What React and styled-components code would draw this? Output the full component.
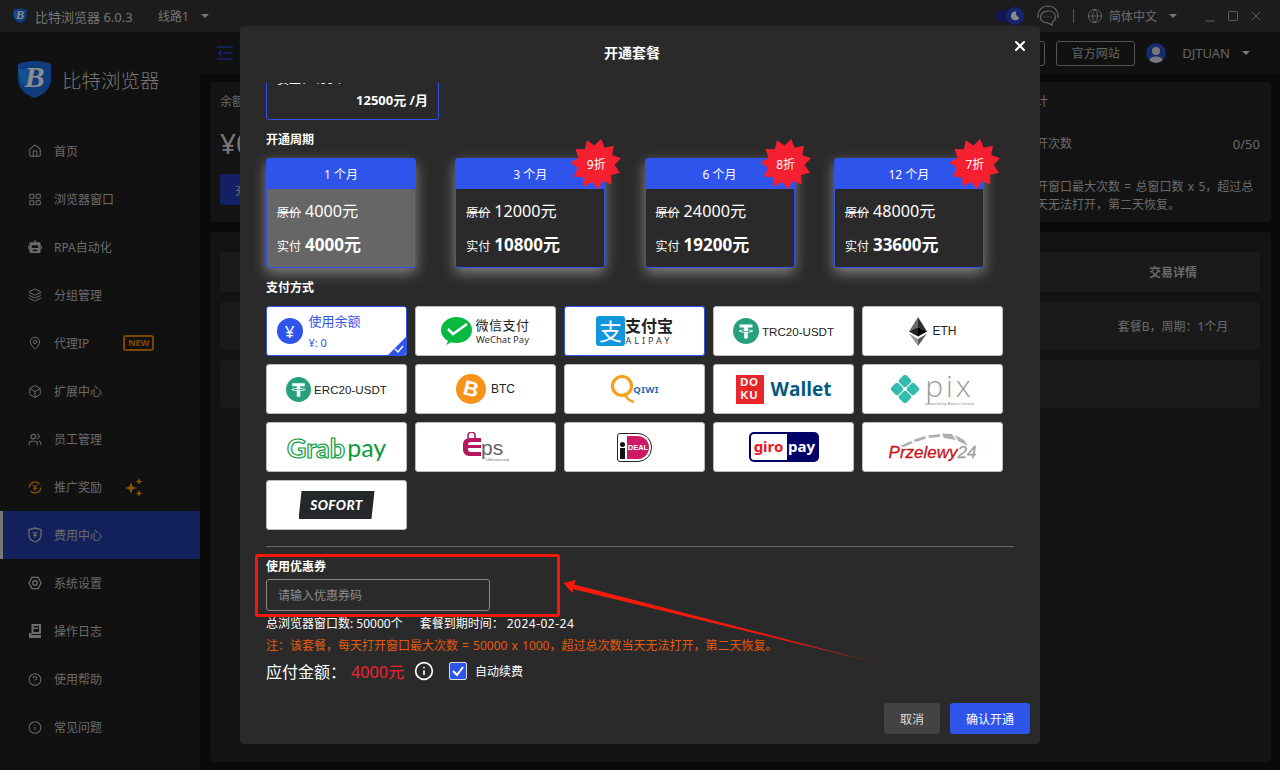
import React from 'react';
import styled, { createGlobalStyle } from 'styled-components';
import {
  House, LayoutGrid, Layers, MapPin, Box, Users, CircleHelp, Info, Globe, Minus, Square, X,
} from 'lucide-react';

const GlobalStyle = createGlobalStyle`
  html, body { margin: 0; padding: 0; background: #0a0a0a; }
  * { box-sizing: border-box; }
  body { font-family: "Noto Sans", "Noto Sans CJK SC", sans-serif; }
`;

const Page = styled.div`
  position: relative;
  width: 1280px;
  height: 770px;
  overflow: hidden;
  display: flex;
  flex-direction: column;
  font-size: 12px;
  color: #6b6b6b;
`;

const TitleBar = styled.div`
  height: 32px;
  flex: none;
  background: #1c1c1c;
  display: flex;
  align-items: center;
  padding-left: 13px;
  color: #757575;
`;

const TitleName = styled.span`
  margin-left: 8px;
  width: 123px;
  font-size: 13px;
`;

const Caret = styled.span`
  width: 0;
  height: 0;
  border-left: 4px solid transparent;
  border-right: 4px solid transparent;
  border-top: 4px solid ${props => props.$color || '#777'};
  margin-left: ${props => props.$left || 12}px;
`;

const TitleRight = styled.div`
  margin-left: auto;
  display: flex;
  align-items: center;
  padding-right: 17px;
  color: #6e6e6e;
`;

const Toggle = styled.div`
  position: relative;
  width: 28px;
  height: 12px;
  border-radius: 6px;
  background: #12194a;
`;

const ToggleKnob = styled.div`
  position: absolute;
  right: -1px;
  top: -3px;
  width: 18px;
  height: 18px;
  border-radius: 50%;
  background: #16246c;
  display: flex;
  align-items: center;
  justify-content: center;
`;

const SupportIcon = styled.svg`
  margin-left: 13px;
`;

const BarSep = styled.div`
  width: 1px;
  height: 14px;
  background: #555;
  margin: 0 13px;
`;

const LangName = styled.span`
  margin-left: 6px;
`;

const WindowButtons = styled.div`
  display: flex;
  align-items: center;
  gap: 10px;
  margin-left: 26px;
  color: #6e6e6e;
`;

const MinimizeIcon = styled(Minus)`
  margin-top: 10px;
`;

const Layout = styled.div`
  flex: 1;
  display: flex;
  min-height: 0;
`;

const Sidebar = styled.div`
  width: 200px;
  flex: none;
  background: #111;
  display: flex;
  flex-direction: column;
`;

const Brand = styled.div`
  height: 95px;
  display: flex;
  align-items: center;
  padding: 0 0 0 17px;
  gap: 10px;
  font-size: 19.5px;
  font-weight: 300;
  color: #757575;
`;

const MenuList = styled.div`
  display: flex;
  flex-direction: column;
`;

const MenuItem = styled.div`
  height: 48px;
  display: flex;
  align-items: center;
  padding-left: ${props => props.$active ? 25 : 28}px;
  gap: 12px;
  background: ${props => props.$active ? '#12205c' : 'transparent'};
  border-left: ${props => props.$active ? '3px solid #777' : 'none'};
  color: #6b6b6b;
`;

const MenuIcon = styled.span`
  width: 14px;
  height: 16px;
  display: flex;
  align-items: center;
  justify-content: center;
  flex: none;
`;

const NewBadge = styled.span`
  margin-left: 22px;
  width: 31px;
  height: 16px;
  border: 2px solid #7a4700;
  border-radius: 3px;
  color: #7a4700;
  font-size: 9px;
  font-weight: 800;
  line-height: 12px;
  text-align: center;
`;

const Spark = styled.span`
  margin-left: 10px;
  display: flex;
`;

const Main = styled.div`
  flex: 1;
  display: flex;
  flex-direction: column;
  min-width: 0;
`;

const Header = styled.div`
  height: 42px;
  flex: none;
  background: #111;
  display: flex;
  align-items: center;
  padding: 0 30px 0 17px;
`;

const HeaderRight = styled.div`
  margin-left: auto;
  display: flex;
  align-items: center;
  color: #666;
`;

const OutlineButton = styled.div`
  width: ${props => props.$width}px;
  height: 25px;
  margin-right: 11px;
  border: 1px solid #555;
  border-radius: 3px;
  display: flex;
  align-items: center;
  justify-content: center;
`;

const Avatar = styled.div`
  width: 20px;
  height: 20px;
  border-radius: 50%;
  background: #1a2a70;
  overflow: hidden;
  display: flex;
  justify-content: center;
`;

const UserName = styled.span`
  margin-left: 16px;
  font-size: 13px;
`;

const Content = styled.div`
  flex: 1;
  background: #0a0a0a;
  padding: 8px 9px 8px 10px;
  display: flex;
  flex-direction: column;
  gap: 10px;
`;

const TopCards = styled.div`
  height: 140px;
  display: flex;
  gap: 10px;
`;

const Card = styled.div`
  background: #131313;
  border-radius: 4px;
  padding: 12px 10px;
  flex: ${props => props.$grow ? 1 : 'none'};
  width: ${props => props.$grow ? 'auto' : '281px'};
  padding-right: ${props => props.$grow ? 10 : 11}px;
`;

const Muted = styled.div`
  line-height: 16px;
`;

const Balance = styled.div`
  font-size: 28px;
  line-height: 40px;
  margin-top: 13px;
  color: #777;
`;

const RechargeButton = styled.div`
  width: 80px;
  height: 31px;
  margin-top: 11px;
  padding-left: 15px;
  background: #142066;
  border-radius: 3px;
  display: flex;
  align-items: center;
`;

const StatRow = styled.div`
  display: flex;
  justify-content: space-between;
  margin-top: 26px;
  line-height: 16px;
`;

const StatValue = styled.span`
  font-size: 13px;
`;

const StatNote = styled.div`
  margin-top: 26px;
  line-height: 18px;
  word-spacing: 1.2px;
`;

const TableCard = styled.div`
  flex: 1;
  background: #131313;
  border-radius: 4px;
  padding: 20px 11px 0 10px;
  display: flex;
  flex-direction: column;
  gap: 10px;
`;

const TableRow = styled.div`
  height: ${props => props.$head ? 40 : 48}px;
  background: #1a1a1a;
  border-radius: 4px;
  display: flex;
  justify-content: flex-end;
  align-items: center;
  font-weight: ${props => props.$head ? 700 : 400};
`;

const TableCell = styled.div`
  width: 174px;
  text-align: center;
`;

const Modal = styled.div`
  position: absolute;
  left: 240px;
  top: 26px;
  width: 800px;
  height: 718px;
  background: #2a2a2a;
  border-radius: 4px;
  display: flex;
  flex-direction: column;
  color: #fff;
`;

const ModalHead = styled.div`
  height: 57px;
  flex: none;
  display: flex;
  align-items: center;
  justify-content: center;
  font-size: 14px;
  font-weight: 700;
  padding: 0 16px 5px 0;
`;

const CloseBtn = styled.span`
  position: absolute;
  right: 12px;
  top: 12px;
  display: flex;
  color: #fff;
`;

const ModalBody = styled.div`
  flex: 1;
  min-height: 0;
  overflow: hidden;
  padding: 0 26px;
`;

const PlanCard = styled.div`
  width: 173px;
  height: 100px;
  margin-top: -63px;
  border: 1px solid #2f54eb;
  border-radius: 3px;
  display: flex;
  flex-direction: column;
  justify-content: flex-end;
  padding: 0 10px 10px;
`;

const PlanLine = styled.div`
  line-height: 16px;
  margin-bottom: 3px;
`;

const PlanPrice = styled.div`
  text-align: right;
  font-weight: 700;
  font-size: 13px;
  line-height: 18px;
`;

const SectionLabel = styled.div`
  font-size: 12px;
  font-weight: 700;
  line-height: 18px;
  margin-top: ${props => props.$top}px;
`;

const PeriodRow = styled.div`
  display: flex;
  gap: 39.3px;
  margin-top: 9px;
`;

const PeriodCard = styled.div`
  position: relative;
  width: 150px;
  height: 110px;
  border: 1px solid #2f54eb;
  border-radius: 3px;
  background: ${props => props.$active ? '#666' : '#2a2a2a'};
  box-shadow: 0 5px 14px rgba(255, 255, 255, 0.42);
`;

const PeriodHead = styled.div`
  height: 30px;
  background: #2f54eb;
  display: flex;
  align-items: center;
  justify-content: center;
`;

const PriceLine = styled.div`
  display: flex;
  align-items: baseline;
  gap: 4px;
  padding-left: 10px;
  height: 34px;
  line-height: 34px;
  margin-top: ${props => props.$first ? 5 : 0}px;
`;

const PriceTag = styled.span`
  text-decoration: ${props => props.$struck ? 'line-through' : 'none'};
`;

const PriceValue = styled.span`
  font-size: ${props => props.$bold ? 17 : 16.2}px;
  font-weight: ${props => props.$bold ? 700 : 400};
`;

const Burst = styled.div`
  position: absolute;
  right: -18px;
  top: -20px;
  width: 52px;
  height: 50px;
  display: flex;
  align-items: center;
  justify-content: center;
`;

const BurstShape = styled.svg`
  position: absolute;
  inset: 0;
`;

const BurstText = styled.span`
  position: relative;
  color: #fff;
  font-size: 12px;
`;

const PayGrid = styled.div`
  display: grid;
  grid-template-columns: repeat(5, 141px);
  grid-auto-rows: 50px;
  gap: 8px;
  margin-top: 9px;
`;

const PayCard = styled.div`
  position: relative;
  overflow: hidden;
  background: #fff;
  border: 1px solid ${props => props.$selected ? '#2f54eb' : '#bbb'};
  border-radius: 3px;
  display: flex;
  align-items: center;
  justify-content: center;
  gap: ${props => props.$gap ?? 3}px;
  color: #222;
`;

const CornerCheck = styled.svg`
  position: absolute;
  right: 0;
  bottom: 0;
`;

const BalanceCoin = styled.span`
  width: 26px;
  height: 26px;
  border-radius: 50%;
  background: #2f54eb;
  color: #fff;
  font-size: 17px;
  display: flex;
  align-items: center;
  justify-content: center;
`;

const BalanceText = styled.div`
  color: #2f54eb;
  width: 88px;
  margin-left: 3px;
  margin-top: -1px;
`;

const BalanceTitle = styled.div`
  font-size: 13px;
  line-height: 20px;
`;

const BalanceAmount = styled.div`
  font-size: 11px;
  line-height: 14px;
  margin-top: 5px;
`;

const TwoLine = styled.div`
  display: flex;
  flex-direction: column;
  align-items: center;
`;

const WechatName = styled.span`
  font-size: 13px;
  line-height: 17px;
  letter-spacing: 0.5px;
`;

const WechatSub = styled.span`
  font-size: 9.5px;
  line-height: 11px;
  color: #333;
`;

const AliName = styled.span`
  font-size: 16px;
  font-weight: 700;
  line-height: 18px;
  color: #222;
`;

const AliSub = styled.span`
  font-size: 9px;
  line-height: 11px;
  letter-spacing: 3px;
  color: #333;
`;

const AliSquare = styled.span`
  width: 29px;
  height: 30px;
  border-radius: 3px;
  background: #1296db;
  color: #fff;
  font-size: 23px;
  line-height: 30px;
  text-align: center;
`;

const CoinLabel = styled.span`
  font-family: "Liberation Sans", Arial, sans-serif;
  font-size: ${props => props.$small ? 11.6 : 12}px;
  color: #222;
`;

const QiwiLabel = styled.span`
  font-size: 9.5px;
  font-weight: 700;
  color: #1f6bb5;
  letter-spacing: 0.3px;
  margin-left: -6px;
  margin-top: 1px;
`;

const DokuSquare = styled.span`
  width: 28px;
  height: 29px;
  background: #e8262a;
  color: #fff;
  font-family: "Liberation Sans", sans-serif;
  font-size: 11px;
  font-weight: 700;
  line-height: 13px;
  text-align: center;
  display: flex;
  flex-direction: column;
  justify-content: center;
  letter-spacing: 1px;
`;

const WalletLabel = styled.span`
  font-family: "Open Sans", sans-serif;
  font-size: 19px;
  font-weight: 700;
  color: #045a7d;
  margin-left: 4px;
`;

const PixName = styled.span`
  font-family: "Open Sans", sans-serif;
  font-weight: 300;
  font-size: 30px;
  line-height: 30px;
  color: #9a9a9a;
  letter-spacing: 3px;
`;

const PixSub = styled.span`
  font-size: 4px;
  line-height: 6px;
  color: #888;
`;

const GrabWord = styled.span`
  font-family: "Lato", sans-serif;
  font-size: 27px;
  font-weight: 700;
  color: #fff;
  -webkit-text-stroke: 1.2px #0a9b3c;
`;

const PayWord = styled.span`
  font-family: "Lato", sans-serif;
  font-size: 25px;
  color: #0a9b3c;
  margin-left: 2px;
`;

const IdealBox = styled.div`
  display: flex;
  align-items: stretch;
  width: 35px;
  height: 29px;
  border: 1px solid #222;
  border-radius: 3px 14px 14px 3px;
  padding: 2px;
  gap: 2px;
`;

const IdealI = styled.span`
  width: 5px;
  flex: none;
  display: flex;
  flex-direction: column;
  justify-content: flex-end;
  gap: 1px;
`;

const IdealDot = styled.span`
  width: 5px;
  height: 5px;
  border-radius: 50%;
  background: #111;
`;

const IdealBar = styled.span`
  width: 5px;
  height: 11px;
  background: #111;
`;

const IdealD = styled.span`
  flex: 1;
  background: #cc1a66;
  border-radius: 0 12px 12px 0;
  color: #fff;
  font-family: "Liberation Sans", sans-serif;
  font-size: 7.5px;
  font-weight: 700;
  line-height: 23px;
  text-align: center;
`;

const GiroBox = styled.div`
  width: 70px;
  height: 30px;
  background: #000268;
  border-radius: 5px;
  display: flex;
  padding: 2px;
  font-size: 15px;
  font-weight: 700;
`;

const GiroLeft = styled.span`
  width: 36px;
  background: #fff;
  color: #f0141e;
  border-radius: 3px 0 0 3px;
  text-align: center;
  line-height: 24px;
`;

const GiroRight = styled.span`
  flex: 1;
  color: #fff;
  text-align: center;
  line-height: 24px;
`;

const P24Wrap = styled.div`
  display: flex;
  flex-direction: column;
  align-items: center;
  width: 86px;
`;

const P24Name = styled.span`
  font-family: "Liberation Sans", sans-serif;
  font-style: italic;
  font-size: 17px;
  line-height: 18px;
  color: #c8141c;
  margin-top: -3px;
  -webkit-text-stroke: 0.3px currentColor;
`;

const P24Num = styled.span`
  color: #a0a0a0;
`;

const SofortBox = styled.div`
  width: 76px;
  height: 28px;
  background: #25282b;
  clip-path: polygon(4% 0, 100% 0, 96% 100%, 0 100%);
  color: #fff;
  font-family: "Lato", sans-serif;
  font-style: italic;
  font-weight: 900;
  font-size: 13.5px;
  line-height: 28px;
  text-align: center;
  letter-spacing: 0.4px;
`;

const Divider = styled.div`
  width: 748px;
  height: 1px;
  background: #666;
  margin-top: 16px;
`;

const CouponInput = styled.input`
  display: block;
  width: 224px;
  height: 32px;
  margin-top: 3px;
  padding: 0 11px;
  background: transparent;
  border: 1px solid #888;
  border-radius: 3px;
  color: #fff;
  font: inherit;
  font-size: 12px;
  outline: none;
  &::placeholder { color: #8c8c8c; }
`;

const InfoLine = styled.div`
  margin-top: 4px;
  line-height: 18px;
  display: flex;
`;

const InfoGap = styled.span`
  margin-left: 17px;
`;

const InfoDate = styled.span`
  margin-left: 3px;
  letter-spacing: 0.5px;
`;

const NoteLine = styled.div`
  margin-top: 4px;
  line-height: 18px;
  color: #e8590c;
  word-spacing: 1px;
`;

const PayRow = styled.div`
  margin-top: 4px;
  height: 24px;
  display: flex;
  align-items: center;
`;

const PayLabel = styled.span`
  font-size: 16px;
  width: 85px;
`;

const PayAmount = styled.span`
  font-size: 16.2px;
  color: #f5222d;
  width: 63px;
`;

const InfoCircle = styled.span`
  display: flex;
  width: 35px;
  color: #fff;
`;

const CheckBox = styled.span`
  width: 18px;
  height: 18px;
  border-radius: 2px;
  background: #2f54eb;
  border: 1px solid #ddd;
  display: flex;
  align-items: center;
  justify-content: center;
  margin-right: 8px;
`;

const ModalFoot = styled.div`
  flex: none;
  display: flex;
  justify-content: flex-end;
  gap: 10px;
  padding: 0 10px 10px 0;
`;

const FootButton = styled.div`
  width: ${props => props.$primary ? 80 : 56}px;
  height: 31px;
  border-radius: 3px;
  background: ${props => props.$primary ? '#2f54eb' : '#434343'};
  color: ${props => props.$primary ? '#fff' : '#ddd'};
  display: flex;
  align-items: center;
  justify-content: center;
`;

const RedBox = styled.div`
  position: absolute;
  left: 15px;
  top: 528px;
  width: 305px;
  height: 63px;
  border: 3px solid #f5170c;
  border-radius: 3px;
  pointer-events: none;
`;

const ArrowSvg = styled.svg`
  position: absolute;
  left: 320px;
  top: 550px;
`;

const burstPoints = (() => {
  const pts = [];
  const n = 11;
  for (let i = 0; i < n * 2; i++) {
    const r = i % 2 === 0 ? 25.5 : 18.5;
    const a = (Math.PI * i) / n - Math.PI / 2.3;
    pts.push(`${(26 + r * Math.cos(a)).toFixed(1)},${(25 + r * Math.sin(a)).toFixed(1)}`);
  }
  return pts.join(' ');
})();

const ShieldLogo = ({ size }) => (
  <svg width={size} height={size * 1.12} viewBox="0 0 36 40">
    <path d="M18 1 C24 1 30 2 35 4 L35 20 C35 29 27 36 18 39 C9 36 1 29 1 20 L1 4 C6 2 12 1 18 1Z" fill="#0f3c7e" />
    <path d="M1 9 L14 9 L10 27 L4 24 Z" fill="#12508f" />
    <text x="18" y="28" textAnchor="middle" fontFamily="Liberation Serif, serif" fontStyle="italic" fontWeight="700" fontSize="31" fill="#8d8d8d">B</text>
  </svg>
);

const CollapseIcon = () => (
  <svg width="16" height="14" viewBox="0 0 16 14" fill="none" stroke="#16246c" strokeWidth="1.5">
    <path d="M0 1 H16 M6 7 H16 M0 13 H16" />
    <path d="M4.5 3.5 L0.5 7 L4.5 10.5Z" fill="#16246c" stroke="none" />
  </svg>
);

const RobotIcon = () => (
  <svg width="15" height="14" viewBox="0 0 15 14" fill="#6b6b6b">
    <path d="M6.5 0 H8.5 V2 H6.5Z" />
    <path d="M3 2 H12 A1.5 1.5 0 0 1 13.5 3.5 V12 A1.5 1.5 0 0 1 12 13.5 H3 A1.5 1.5 0 0 1 1.5 12 V3.5 A1.5 1.5 0 0 1 3 2Z M4 5 V8 H11 V5Z M5 10 V11.5 H10 V10Z" fillRule="evenodd" />
    <path d="M0 5.5 H1 V9.5 H0Z M14 5.5 H15 V9.5 H14Z" />
  </svg>
);

const RewardIcon = () => (
  <svg width="15" height="15" viewBox="0 0 16 16" fill="none" stroke="#8a4f00" strokeWidth="1.5">
    <path d="M1.5 8a6.5 6.5 0 0 1 11.5-4" />
    <path d="M14.5 8a6.5 6.5 0 0 1-11.5 4" />
    <path d="M5.5 5l2.5 3 2.5-3M8 8v4M5.8 9h4.4" strokeWidth="1.2" />
  </svg>
);

const SparkIcon = () => (
  <svg width="20" height="19" viewBox="0 0 20 19" fill="#8a5400">
    <path d="M7 4 L8.6 8.4 L13 10 L8.6 11.6 L7 16 L5.4 11.6 L1 10 L5.4 8.4Z" />
    <path d="M15 0 L16 2.4 L18.4 3.4 L16 4.4 L15 6.8 L14 4.4 L11.6 3.4 L14 2.4Z" />
    <path d="M15 12 L16 14.4 L18.4 15.4 L16 16.4 L15 18.8 L14 16.4 L11.6 15.4 L14 14.4Z" />
  </svg>
);

const FeeIcon = () => (
  <svg width="14" height="16" viewBox="0 0 14 16" fill="none" stroke="#6b6b6b" strokeWidth="1.3">
    <path d="M7 1 L13 2.6 L13 8 C13 11.5 10 14 7 15 C4 14 1 11.5 1 8 L1 2.6Z" />
    <path d="M5 4.8l2 2.6 2-2.6M7 7.4v3.6M5.2 8.4h3.6" strokeWidth="1.1" />
  </svg>
);

const SettingsIcon = () => (
  <svg width="15" height="14" viewBox="0 0 15 14" fill="none" stroke="#6b6b6b" strokeWidth="1.4">
    <path d="M4.2 1 L10.8 1 L14 7 L10.8 13 L4.2 13 L1 7Z" />
    <circle cx="7.5" cy="7" r="2.4" />
  </svg>
);

const LogIcon = () => (
  <svg width="13" height="14" viewBox="0 0 13 14" fill="#6b6b6b">
    <path d="M2.5 0 H12 V10 H2.5 Z M4.5 2 V8 H10 V2 Z" fillRule="evenodd" />
    <path d="M3 3.5 H9 V5 H3 Z" />
    <path d="M0 9 H2.5 V11 H12 V14 H0 Z" />
  </svg>
);

const TetherIcon = ({ size }) => (
  <svg width={size} height={size} viewBox="0 0 26 26">
    <circle cx="13" cy="13" r="13" fill="#26a17b" />
    <path d="M6.5 6.5 H19.5 V9.5 H14.8 V11.4 C17.8 11.6 20.2 12.2 20.2 13 C20.2 13.8 17.8 14.4 14.8 14.6 V20.5 H11.2 V14.6 C8.2 14.4 5.8 13.8 5.8 13 C5.8 12.2 8.2 11.6 11.2 11.4 V9.5 H6.5 Z M11.2 12.3 C9 12.4 7.4 12.7 7.4 13 C7.4 13.4 10 13.7 13 13.7 C16 13.7 18.6 13.4 18.6 13 C18.6 12.7 17 12.4 14.8 12.3 V13 H11.2 Z" fill="#fff" fillRule="evenodd" />
  </svg>
);

const WechatIcon = () => (
  <svg width="31" height="29" viewBox="0 0 31 29">
    <ellipse cx="15.5" cy="13" rx="15.5" ry="13" fill="#09b83e" />
    <path d="M5 28 L9 20 L13 24 Z" fill="#09b83e" />
    <path d="M7 12 L12 17 L26 7" fill="none" stroke="#fff" strokeWidth="2.6" />
  </svg>
);

const EthIcon = () => (
  <svg width="18" height="29" viewBox="0 0 18 29">
    <path d="M9 0 L0 14.5 L9 10Z" fill="#6a6a6a" />
    <path d="M9 0 L18 14.5 L9 10Z" fill="#2d2d2d" />
    <path d="M0 14.5 L9 10 V19.5Z" fill="#222" />
    <path d="M18 14.5 L9 10 V19.5Z" fill="#000" />
    <path d="M0 16.5 L9 22 V29Z" fill="#9a9a9a" />
    <path d="M18 16.5 L9 22 V29Z" fill="#5c5c5c" />
  </svg>
);

const BtcIcon = () => (
  <svg width="30" height="30" viewBox="0 0 30 30">
    <circle cx="15" cy="15" r="15" fill="#f7931a" />
    <text x="15" y="22" textAnchor="middle" fontFamily="Liberation Sans, sans-serif" fontWeight="700" fontSize="21" fill="#fff" transform="rotate(14 15 15)">B</text>
  </svg>
);

const QiwiIcon = () => (
  <svg width="26" height="29" viewBox="0 0 26 29" fill="none" stroke="#f7a11a">
    <circle cx="12" cy="11" r="9.5" strokeWidth="3.2" />
    <path d="M14 18 C16 23 19 26 24 27" strokeWidth="2.2" />
  </svg>
);

const PixIcon = () => (
  <svg width="28" height="28" viewBox="0 0 28 28" fill="#32bcad">
    <rect x="9" y="1" width="10" height="10" rx="2" transform="rotate(45 14 6)" />
    <rect x="9" y="17" width="10" height="10" rx="2" transform="rotate(45 14 22)" />
    <rect x="1" y="9" width="10" height="10" rx="2" transform="rotate(45 6 14)" />
    <rect x="17" y="9" width="10" height="10" rx="2" transform="rotate(45 22 14)" />
  </svg>
);

const EpsLogo = () => (
  <svg width="46" height="30" viewBox="0 0 46 30">
    <path d="M5 6 V3.5 A3.5 3.5 0 0 1 12 3.5 V6" fill="none" stroke="#b4165f" strokeWidth="1.6" />
    <path d="M6 6 H18 V10 H8 A3 3 0 0 0 5 13 H18 V16 H5 A3 3 0 0 0 8 20 H18 V24 H6 A6 6 0 0 1 0 18 V12 A6 6 0 0 1 6 6Z" fill="#b4165f" />
    <text x="18" y="23" fontFamily="Liberation Sans, sans-serif" fontSize="21" fill="#5f6368">ps</text>
    <text x="23" y="29" fontFamily="Liberation Sans, sans-serif" fontSize="4" fill="#777">Überweisung</text>
  </svg>
);

const P24Arc = () => (
  <svg width="70" height="15" viewBox="0 0 70 15" fill="#b0b0b0">
    <path d="M2 14 L13 9 L15 11 L6 15Z" />
    <path d="M15 8 L27 4 L28 6.5 L18 10Z" />
    <path d="M30 3.5 L42 2 L42 5 L31 6Z" />
    <path d="M44 1.5 L54 2 L58 8 L46 6Z" />
    <path d="M57 3 L66 8 L70 14 L60 9Z" />
  </svg>
);

const menu = [
  { label: '首页', icon: <House size={16} strokeWidth={1.8} /> },
  { label: '浏览器窗口', icon: <LayoutGrid size={15} strokeWidth={1.8} /> },
  { label: 'RPA自动化', icon: <RobotIcon /> },
  { label: '分组管理', icon: <Layers size={16} strokeWidth={1.7} /> },
  { label: '代理IP', icon: <MapPin size={16} strokeWidth={1.7} />, extra: <NewBadge>NEW</NewBadge> },
  { label: '扩展中心', icon: <Box size={15} strokeWidth={1.7} /> },
  { label: '员工管理', icon: <Users size={15} strokeWidth={1.8} /> },
  { label: '推广奖励', icon: <RewardIcon />, extra: <Spark><SparkIcon /></Spark> },
  { label: '费用中心', icon: <FeeIcon />, active: true },
  { label: '系统设置', icon: <SettingsIcon /> },
  { label: '操作日志', icon: <LogIcon /> },
  { label: '使用帮助', icon: <CircleHelp size={15} strokeWidth={1.8} /> },
  { label: '常见问题', icon: <Info size={15} strokeWidth={1.8} /> },
];

const periods = [
  { name: '1 个月', origin: '4000元', real: '4000元', active: true },
  { name: '3 个月', origin: '12000元', real: '10800元', off: '9折' },
  { name: '6 个月', origin: '24000元', real: '19200元', off: '8折' },
  { name: '12 个月', origin: '48000元', real: '33600元', off: '7折' },
];

function PayOptions() {
  return (
    <PayGrid>
      <PayCard $selected $gap={3}>
        <BalanceCoin>¥</BalanceCoin>
        <BalanceText>
          <BalanceTitle>使用余额</BalanceTitle>
          <BalanceAmount>¥: 0</BalanceAmount>
        </BalanceText>
        <CornerCheck width="18" height="18" viewBox="0 0 18 18">
          <path d="M18 0 V18 H0Z" fill="#2f54eb" />
          <path d="M7 12 L10 15 L15 9" fill="none" stroke="#fff" strokeWidth="1.5" />
        </CornerCheck>
      </PayCard>
      <PayCard>
        <WechatIcon />
        <TwoLine>
          <WechatName>微信支付</WechatName>
          <WechatSub>WeChat Pay</WechatSub>
        </TwoLine>
      </PayCard>
      <PayCard $selected $gap={0}>
        <AliSquare>支</AliSquare>
        <TwoLine>
          <AliName>支付宝</AliName>
          <AliSub>ALIPAY</AliSub>
        </TwoLine>
      </PayCard>
      <PayCard><TetherIcon size={26} /><CoinLabel $small>TRC20-USDT</CoinLabel></PayCard>
      <PayCard $gap={6}><EthIcon /><CoinLabel>ETH</CoinLabel></PayCard>
      <PayCard><TetherIcon size={25} /><CoinLabel $small>ERC20-USDT</CoinLabel></PayCard>
      <PayCard $gap={5}><BtcIcon /><CoinLabel>BTC</CoinLabel></PayCard>
      <PayCard><QiwiIcon /><QiwiLabel>QIWI</QiwiLabel></PayCard>
      <PayCard>
        <DokuSquare><span>DO</span><span>KU</span></DokuSquare>
        <WalletLabel>Wallet</WalletLabel>
      </PayCard>
      <PayCard $gap={6}>
        <PixIcon />
        <TwoLine>
          <PixName>pix</PixName>
          <PixSub>powered by Banco Central</PixSub>
        </TwoLine>
      </PayCard>
      <PayCard $gap={0}><GrabWord>Grab</GrabWord><PayWord>pay</PayWord></PayCard>
      <PayCard><EpsLogo /></PayCard>
      <PayCard>
        <IdealBox>
          <IdealI><IdealDot /><IdealBar /></IdealI>
          <IdealD>DEAL</IdealD>
        </IdealBox>
      </PayCard>
      <PayCard>
        <GiroBox><GiroLeft>giro</GiroLeft><GiroRight>pay</GiroRight></GiroBox>
      </PayCard>
      <PayCard>
        <P24Wrap>
          <P24Arc />
          <P24Name>Przelewy<P24Num>24</P24Num></P24Name>
        </P24Wrap>
      </PayCard>
      <PayCard><SofortBox>SOFORT</SofortBox></PayCard>
    </PayGrid>
  );
}

function App() {
  return (
    <Page>
      <GlobalStyle />
      <TitleBar>
        <ShieldLogo size={14} />
        <TitleName>比特浏览器 6.0.3</TitleName>
        <span>线路1</span>
        <Caret $left={12} />
        <TitleRight>
          <Toggle>
            <ToggleKnob>
              <svg width="10" height="10" viewBox="0 0 10 10"><path d="M6.5 0.8 A4.3 4.3 0 1 0 9.3 6.5 A4 4 0 0 1 6.5 0.8Z" fill="#8a8a8a" /></svg>
            </ToggleKnob>
          </Toggle>
          <SupportIcon width="24" height="22" viewBox="0 0 24 22" fill="none" stroke="#6a6a6a" strokeWidth="1.2">
            <path d="M2 13 V10 A10 9 0 0 1 22 10 V13" />
            <path d="M12 6 C7.5 6 4.5 8.5 4.5 12 C4.5 15.5 7.5 18 12 18 L16 20 L16.5 17 C18.5 16 19.5 14 19.5 12 C19.5 8.5 16.5 6 12 6Z" />
            <path d="M8.5 12h.8M11.6 12h.8M14.7 12h.8" strokeWidth="1.6" />
          </SupportIcon>
          <BarSep />
          <Globe size={16} strokeWidth={1.2} />
          <LangName>简体中文</LangName>
          <Caret $left={12} />
          <WindowButtons>
            <MinimizeIcon size={14} strokeWidth={1.4} />
            <Square size={12} strokeWidth={1.6} />
            <X size={14} strokeWidth={1.6} />
          </WindowButtons>
        </TitleRight>
      </TitleBar>
      <Layout>
        <Sidebar>
          <Brand><ShieldLogo size={35} />比特浏览器</Brand>
          <MenuList>
            {menu.map(item => (
              <MenuItem key={item.label} $active={item.active}>
                <MenuIcon>{item.icon}</MenuIcon>
                <span>{item.label}</span>
                {item.extra}
              </MenuItem>
            ))}
          </MenuList>
        </Sidebar>
        <Main>
          <Header>
            <CollapseIcon />
            <HeaderRight>
              <OutlineButton $width={80}>帮助文档</OutlineButton>
              <OutlineButton $width={79}>官方网站</OutlineButton>
              <Avatar>
                <svg width="20" height="20" viewBox="0 0 20 20" fill="#7a7a7a">
                  <circle cx="10" cy="8" r="4" />
                  <ellipse cx="10" cy="18" rx="7" ry="4.5" />
                </svg>
              </Avatar>
              <UserName>DJTUAN</UserName>
              <Caret $left={12} />
            </HeaderRight>
          </Header>
          <Content>
            <TopCards>
              <Card $grow>
                <Muted>余额</Muted>
                <Balance>¥0</Balance>
                <RechargeButton>充值</RechargeButton>
              </Card>
              <Card>
                <Muted>使用统计</Muted>
                <StatRow><span>今日打开次数</span><StatValue>0/50</StatValue></StatRow>
                <StatNote>每天打开窗口最大次数 = 总窗口数 x 5，超过总次数当天无法打开，第二天恢复。</StatNote>
              </Card>
            </TopCards>
            <TableCard>
              <TableRow $head><TableCell>交易详情</TableCell></TableRow>
              <TableRow><TableCell>套餐B，周期：1个月</TableCell></TableRow>
              <TableRow />
            </TableCard>
          </Content>
        </Main>
      </Layout>

      <Modal>
        <ModalHead>开通套餐</ModalHead>
        <CloseBtn><X size={16} strokeWidth={3} /></CloseBtn>
        <ModalBody>
          <PlanCard>
            <PlanLine>员工：400个</PlanLine>
            <PlanPrice>12500元 /月</PlanPrice>
          </PlanCard>
          <SectionLabel $top={11}>开通周期</SectionLabel>
          <PeriodRow>
            {periods.map(p => (
              <PeriodCard key={p.name} $active={p.active}>
                <PeriodHead>{p.name}</PeriodHead>
                <PriceLine $first>
                  <PriceTag $struck>原价</PriceTag>
                  <PriceValue>{p.origin}</PriceValue>
                </PriceLine>
                <PriceLine>
                  <PriceTag>实付</PriceTag>
                  <PriceValue $bold>{p.real}</PriceValue>
                </PriceLine>
                {p.off && (
                  <Burst>
                    <BurstShape width="52" height="50" viewBox="0 0 52 50">
                      <polygon points={burstPoints} fill="#f5202f" />
                    </BurstShape>
                    <BurstText>{p.off}</BurstText>
                  </Burst>
                )}
              </PeriodCard>
            ))}
          </PeriodRow>
          <SectionLabel $top={11}>支付方式</SectionLabel>
          <PayOptions />
          <Divider />
          <SectionLabel $top={11}>使用优惠券</SectionLabel>
          <CouponInput placeholder="请输入优惠券码" />
          <InfoLine>
            <span>总浏览器窗口数: 50000个</span>
            <InfoGap>套餐到期时间：</InfoGap>
            <InfoDate>2024-02-24</InfoDate>
          </InfoLine>
          <NoteLine>注：该套餐，每天打开窗口最大次数 = 50000 x 1000，超过总次数当天无法打开，第二天恢复。</NoteLine>
          <PayRow>
            <PayLabel>应付金额：</PayLabel>
            <PayAmount>4000元</PayAmount>
            <InfoCircle><Info size={20} strokeWidth={2} /></InfoCircle>
            <CheckBox>
              <svg width="14" height="14" viewBox="0 0 14 14"><path d="M2 7 L6 11 L12 3" fill="none" stroke="#fff" strokeWidth="2" /></svg>
            </CheckBox>
            <span>自动续费</span>
          </PayRow>
        </ModalBody>
        <ModalFoot>
          <FootButton>取消</FootButton>
          <FootButton $primary>确认开通</FootButton>
        </ModalFoot>
        <RedBox />
        <ArrowSvg width="340" height="100" viewBox="560 576 340 100">
          <defs>
            <linearGradient id="arrowFade" x1="0" y1="0" x2="1" y2="0">
              <stop offset="0" stopColor="#ff1a0a" />
              <stop offset="0.7" stopColor="#e81a0e" />
              <stop offset="1" stopColor="#e81a0e" stopOpacity="0.1" />
            </linearGradient>
          </defs>
          <polygon points="563.5,583 576,580 574,584.5 897,668 573,589 572.5,593" fill="url(#arrowFade)" />
        </ArrowSvg>
      </Modal>
    </Page>
  );
}

export default App;
